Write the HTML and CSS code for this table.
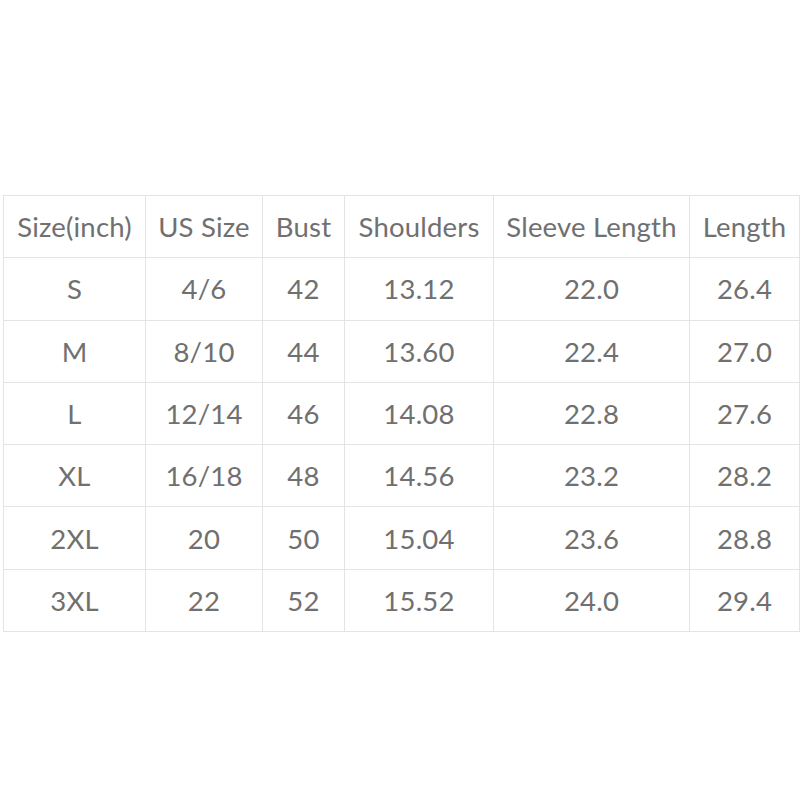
FILE: index.html
```html
<!DOCTYPE html>
<html>
<head>
<meta charset="utf-8">
<link rel="stylesheet" href="styles.css">
</head>
<body>
<div class="page">
<table class="sizes">
<colgroup>
<col class="c1"><col class="c2"><col class="c3"><col class="c4"><col class="c5"><col class="c6">
</colgroup>
<tr><td>Size(inch)</td><td>US Size</td><td>Bust</td><td>Shoulders</td><td>Sleeve Length</td><td>Length</td></tr>
<tr><td>S</td><td>4/6</td><td>42</td><td>13.12</td><td>22.0</td><td>26.4</td></tr>
<tr><td>M</td><td>8/10</td><td>44</td><td>13.60</td><td>22.4</td><td>27.0</td></tr>
<tr><td>L</td><td>12/14</td><td>46</td><td>14.08</td><td>22.8</td><td>27.6</td></tr>
<tr><td>XL</td><td>16/18</td><td>48</td><td>14.56</td><td>23.2</td><td>28.2</td></tr>
<tr><td>2XL</td><td>20</td><td>50</td><td>15.04</td><td>23.6</td><td>28.8</td></tr>
<tr><td>3XL</td><td>22</td><td>52</td><td>15.52</td><td>24.0</td><td>29.4</td></tr>
</table>
</div>
</body>
</html>
```
FILE: styles.css
```css
html, body {
  margin: 0;
  padding: 0;
  background: #ffffff;
}
.page {
  padding: 195px 0 0 3px;
}
.sizes {
  border-collapse: collapse;
  table-layout: fixed;
  width: 796px;
  font-family: Lato, "Open Sans", sans-serif;
  font-size: 27.5px;
  letter-spacing: 0.2px;
  color: #707070;
}
.c1 { width: 142px; }
.c2 { width: 117px; }
.c3 { width: 82px; }
.c4 { width: 149px; }
.c5 { width: 196px; }
.c6 { width: 110px; }
.sizes td {
  border: 1px solid #e4e4e4;
  height: 61.3px;
  padding: 0;
  text-align: center;
  vertical-align: middle;
  white-space: nowrap;
}
```
